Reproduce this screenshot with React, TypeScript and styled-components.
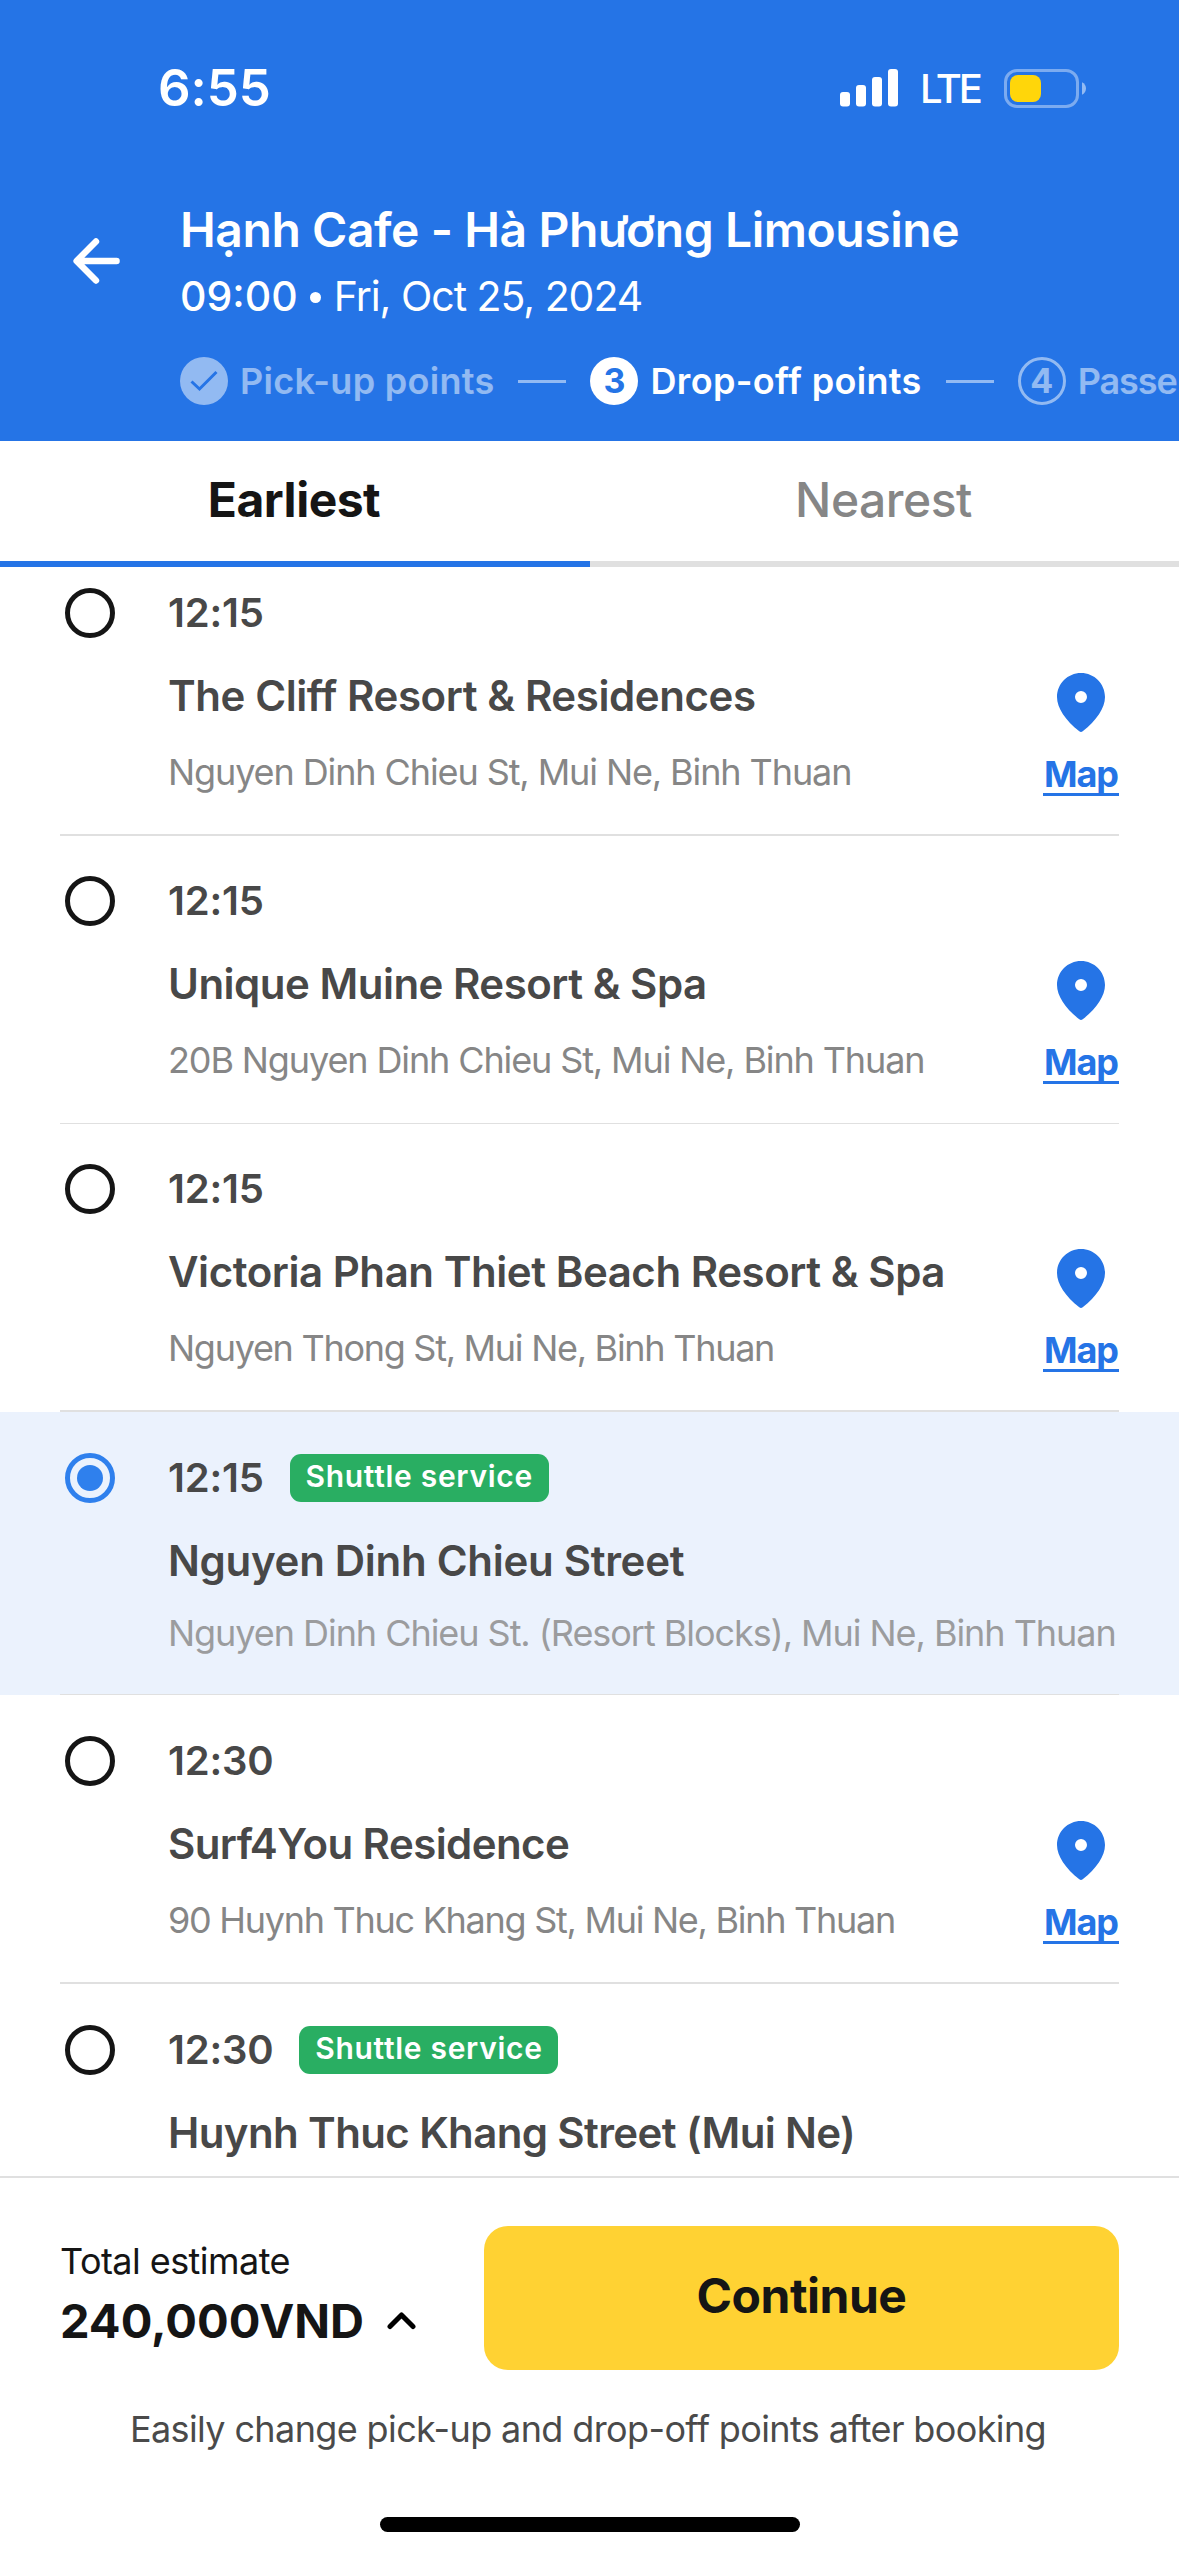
import React from "react";
import styled, { createGlobalStyle, css } from "styled-components";

const BLUE = "#2574e6";
const INK = "#151515";
const LINE = "#e0e0e0";

const GlobalStyle = createGlobalStyle`
  *, *::before, *::after { box-sizing: border-box; }
  html, body { margin: 0; padding: 0; background: #fff; }
  body { font-family: Inter, "Noto Sans", "Liberation Sans", sans-serif; -webkit-font-smoothing: antialiased; }
  button { font: inherit; border: 0; padding: 0; background: none; color: inherit; }
`;

const Screen = styled.div`
  width: 1179px;
  height: 2556px;
  display: flex;
  flex-direction: column;
  overflow: hidden;
  background: #fff;
  white-space: nowrap;
`;

const Header = styled.header`
  flex: none;
  height: 441px;
  overflow: hidden;
  background: ${BLUE};
  color: #fff;
`;

const StatusBar = styled.div`
  height: 176px;
  padding: 0 93px 0 158px;
  display: flex;
  align-items: center;
`;

const Clock = styled.span`
  font-size: 51px;
  font-weight: 600;
  letter-spacing: -0.1px;
  line-height: 60px;
`;

const Indicators = styled.div`
  margin-left: auto;
  display: flex;
  align-items: center;
`;

const Network = styled.span`
  margin: 2px 24px 0 22px;
  font-size: 40px;
  font-weight: 500;
  letter-spacing: -3px;
  line-height: 48px;
`;

const HeaderMain = styled.div`
  display: grid;
  grid-template-columns: 180px 1fr;
  padding-top: 24px;
`;

const BackButton = styled.button`
  height: 122px;
  padding-left: 73px;
  display: flex;
  align-items: center;
`;

const Title = styled.h1`
  margin: 0;
  font-size: 48px;
  font-weight: 600;
  line-height: 60px;
  letter-spacing: -0.44px;
`;

const Subtitle = styled.div`
  margin-top: 6px;
  display: flex;
  align-items: center;
  font-size: 41px;
  line-height: 60px;
`;

const Departure = styled.span`
  font-weight: 500;
`;

const TravelDate = styled.span`
  letter-spacing: -1.02px;
`;

const Dot = styled.span`
  width: 11px;
  height: 11px;
  margin: 2px 13px 0 12px;
  border-radius: 50%;
  background: #fff;
`;

const Steps = styled.div`
  grid-column: 2;
  margin-top: 31px;
  display: flex;
  align-items: center;
  gap: 24px;
`;

const Step = styled.div<{ $active?: boolean }>`
  flex: none;
  display: flex;
  align-items: center;
  gap: 12px;
  height: 48px;
  opacity: ${(p) => (p.$active ? 1 : 0.5)};
`;

const StepMark = styled.span<{ $filled?: boolean }>`
  width: 48px;
  height: 48px;
  border-radius: 50%;
  display: flex;
  align-items: center;
  justify-content: center;
  font-size: 34px;
  font-weight: 700;
  line-height: 1;
  color: ${(p) => (p.$filled ? BLUE : "#fff")};
  ${(p) =>
    p.$filled
      ? css`
          background: #fff;
        `
      : css`
          border: 3px solid #fff;
        `}
`;

const StepLabel = styled.span<{ $spacing: number }>`
  font-size: 36px;
  font-weight: 600;
  line-height: 48px;
  letter-spacing: ${(p) => p.$spacing}px;
`;

const StepLine = styled.span`
  flex: none;
  width: 48px;
  height: 3px;
  background: rgba(255, 255, 255, 0.5);
`;

const Tabs = styled.nav`
  flex: none;
  height: 126px;
  display: grid;
  grid-template-columns: 590px 1fr;
`;

const Tab = styled.button<{ $active?: boolean }>`
  padding: 0 2px 2px 0;
  border-bottom: 6px solid ${(p) => (p.$active ? BLUE : LINE)};
  color: ${(p) => (p.$active ? INK : "#868686")};
  font-size: 48px;
  font-weight: ${(p) => (p.$active ? 700 : 500)};
  letter-spacing: -0.5px;
  line-height: 60px;
`;

const List = styled.main`
  flex: 1;
  min-height: 0;
  overflow: hidden;
`;

const ScrolledRows = styled.div`
  margin-top: -19px;
`;

const Row = styled.section<{ $selected?: boolean; $height?: number }>`
  height: ${(p) => p.$height ?? 288}px;
  padding: 0 60px;
  background: ${(p) => (p.$selected ? "#ebf2fd" : "#fff")};
`;

const RowInner = styled.div<{ $thin?: boolean; $top?: number }>`
  height: 100%;
  padding: ${(p) => p.$top ?? 35}px 0 0 5px;
  border-bottom: ${(p) => (p.$thin ? 1 : 2)}px solid ${LINE};
  display: grid;
  grid-template-columns: 103px 1fr 76px;
`;

const Radio = styled.span<{ $selected?: boolean }>`
  width: 50px;
  height: 50px;
  margin-top: 5px;
  border: 5px solid ${(p) => (p.$selected ? "#2f80ed" : INK)};
  border-radius: 50%;
  display: flex;
  align-items: center;
  justify-content: center;
  &::after {
    content: "";
    width: 26px;
    height: 26px;
    border-radius: 50%;
    background: ${(p) => (p.$selected ? "#2f80ed" : "transparent")};
  }
`;

const TimeLine = styled.div`
  height: 60px;
  display: flex;
  align-items: center;
  gap: 26px;
`;

const Time = styled.span`
  font-size: 40px;
  font-weight: 600;
  line-height: 60px;
  letter-spacing: -0.2px;
  color: #484848;
`;

const Badge = styled.span`
  height: 48px;
  width: 259px;
  margin-top: -1px;
  border-radius: 11px;
  background: #29ae62;
  color: #fff;
  font-size: 30px;
  font-weight: 600;
  letter-spacing: 0.7px;
  line-height: 45px;
  text-align: center;
`;

const Place = styled.h2<{ $spacing?: number }>`
  margin: 23px 0 0;
  color: #484848;
  font-size: 42px;
  font-weight: 600;
  line-height: 60px;
  letter-spacing: ${(p) => p.$spacing ?? -0.42}px;
`;

const Address = styled.p<{ $selected?: boolean; $spacing?: number }>`
  margin: ${(p) => (p.$selected ? 15 : 19)}px 0 0;
  width: 0;
  color: ${(p) => (p.$selected ? "#9b9c9e" : "#868686")};
  font-size: 36px;
  line-height: 54px;
  letter-spacing: ${(p) => p.$spacing ?? -1.1}px;
`;

const MapLink = styled.a`
  padding-top: 90px;
  display: flex;
  flex-direction: column;
  align-items: center;
  color: ${BLUE};
`;

const MapLabel = styled.span`
  width: 76px;
  height: 46px;
  margin-top: 18px;
  border-bottom: 3px solid ${BLUE};
  font-size: 36px;
  font-weight: 700;
  line-height: 48px;
  letter-spacing: -1px;
  text-align: center;
`;

const Footer = styled.footer`
  flex: none;
  height: 380px;
  border-top: 2px solid ${LINE};
  display: flex;
  flex-direction: column;
  align-items: center;
`;

const Checkout = styled.div`
  align-self: stretch;
  margin-top: 48px;
  padding: 0 60px;
  display: grid;
  grid-template-columns: 424px 1fr;
`;

const TotalLabel = styled.div`
  margin-top: 11px;
  color: ${INK};
  font-size: 36px;
  line-height: 48px;
  letter-spacing: -0.55px;
`;

const Total = styled.div`
  margin-top: 6px;
  display: flex;
  align-items: center;
  gap: 23px;
  color: ${INK};
  font-size: 47px;
  font-weight: 700;
  line-height: 60px;
`;

const Continue = styled.button`
  height: 144px;
  border-radius: 24px;
  background: #ffd233;
  color: ${INK};
  font-size: 48px;
  font-weight: 700;
  letter-spacing: -0.5px;
  line-height: 60px;
  padding-bottom: 4px;
`;

const Note = styled.p`
  margin: 35px 3px 0 0;
  color: #4a4a4a;
  font-size: 36px;
  line-height: 48px;
  letter-spacing: -0.62px;
`;

const HomeIndicator = styled.div`
  width: 420px;
  height: 15px;
  margin: auto 0 24px;
  border-radius: 8px;
  background: #000;
`;

const SignalIcon = () => (
  <svg width="58" height="38" viewBox="0 0 58 38" fill="#fff">
    <rect x="0" y="23" width="10" height="14.5" rx="3" />
    <rect x="16" y="16" width="10" height="21.5" rx="3" />
    <rect x="32" y="8" width="10" height="29.5" rx="3" />
    <rect x="48" y="0" width="10" height="37.5" rx="3" />
  </svg>
);

const BatteryIcon = () => (
  <svg width="82" height="39" viewBox="0 0 82 39" fill="none">
    <rect x="1.5" y="1.5" width="72" height="36" rx="11.5" stroke="#fff" strokeOpacity="0.4" strokeWidth="3" />
    <path d="M78 13.2c2.4 1 4 3.4 4 6.3s-1.6 5.3-4 6.3z" fill="#fff" fillOpacity="0.5" />
    <rect x="6" y="6" width="31" height="27" rx="8" fill="#ffd60a" />
  </svg>
);

const ArrowIcon = () => (
  <svg width="47" height="46" viewBox="0 0 47 46" fill="none" stroke="#fff" strokeWidth="6.4" strokeLinecap="round" strokeLinejoin="round">
    <path d="M43.6 23H4M23 3.4L3.6 23 23 42.6" />
  </svg>
);

const CheckIcon = () => (
  <svg width="28" height="22" viewBox="0 0 28 22" fill="none" stroke={BLUE} strokeWidth="3">
    <path d="M1.5 11.5l8 7.5L26.5 2" />
  </svg>
);

const PinIcon = () => (
  <svg width="48" height="59" viewBox="0 0 48 59" fill={BLUE}>
    <path
      fillRule="evenodd"
      d="M24 0C10.700 0 0 10.700 0 24c0 11 8.500 23.500 22.300 34.300a2.800 2.800 0 0 0 3.400 0C39.500 47.500 48 35 48 24 48 10.700 37.300 0 24 0zm0 18.100a6 6 0 1 1 0 12 6 6 0 0 1 0-12z"
    />
  </svg>
);

const ChevronUpIcon = () => (
  <svg width="29" height="18" viewBox="0 0 29 18" fill="none" stroke="#000" strokeWidth="5" strokeLinecap="round" strokeLinejoin="round">
    <path d="M3 14.500L14.500 3 26 14.500" />
  </svg>
);

type Stop = {
  time: string;
  place: string;
  address?: string;
  shuttle?: boolean;
  selected?: boolean;
  thin?: boolean;
  height?: number;
  top?: number;
  placeSpacing?: number;
  addressSpacing?: number;
};

const stops: Stop[] = [
  {
    time: "12:15",
    place: "The Cliff Resort & Residences",
    address: "Nguyen Dinh Chieu St, Mui Ne, Binh Thuan",
  },
  {
    time: "12:15",
    place: "Unique Muine Resort & Spa",
    address: "20B Nguyen Dinh Chieu St, Mui Ne, Binh Thuan",
    thin: true,
    placeSpacing: -0.5,
    addressSpacing: -1.12,
  },
  {
    time: "12:15",
    place: "Victoria Phan Thiet Beach Resort & Spa",
    address: "Nguyen Thong St, Mui Ne, Binh Thuan",
    placeSpacing: -0.45,
    addressSpacing: -1.28,
  },
  {
    time: "12:15",
    place: "Nguyen Dinh Chieu Street",
    address: "Nguyen Dinh Chieu St. (Resort Blocks), Mui Ne, Binh Thuan",
    shuttle: true,
    selected: true,
    thin: true,
    height: 283,
    top: 36,
    placeSpacing: -0.3,
    addressSpacing: -1.05,
  },
  {
    time: "12:30",
    place: "Surf4You Residence",
    address: "90 Huynh Thuc Khang St, Mui Ne, Binh Thuan",
    height: 289,
    top: 36,
    placeSpacing: -0.58,
    addressSpacing: -1.28,
  },
  {
    time: "12:30",
    place: "Huynh Thuc Khang Street (Mui Ne)",
    shuttle: true,
    top: 36,
    placeSpacing: -0.62,
  },
];

const StopRow = ({ stop }: { stop: Stop }) => (
  <Row $selected={stop.selected} $height={stop.height}>
    <RowInner $thin={stop.thin} $top={stop.top}>
      <Radio $selected={stop.selected} />
      <div>
        <TimeLine>
          <Time>{stop.time}</Time>
          {stop.shuttle && <Badge>Shuttle service</Badge>}
        </TimeLine>
        <Place $spacing={stop.placeSpacing}>{stop.place}</Place>
        {stop.address && (
          <Address $selected={stop.selected} $spacing={stop.addressSpacing}>
            {stop.address}
          </Address>
        )}
      </div>
      {!stop.shuttle && (
        <MapLink>
          <PinIcon />
          <MapLabel>Map</MapLabel>
        </MapLink>
      )}
    </RowInner>
  </Row>
);

export default function App() {
  return (
    <Screen>
      <GlobalStyle />
      <Header>
        <StatusBar>
          <Clock>6:55</Clock>
          <Indicators>
            <SignalIcon />
            <Network>LTE</Network>
            <BatteryIcon />
          </Indicators>
        </StatusBar>
        <HeaderMain>
          <BackButton aria-label="Back">
            <ArrowIcon />
          </BackButton>
          <div>
            <Title>Hạnh Cafe - Hà Phương Limousine</Title>
            <Subtitle>
              <Departure>09:00</Departure>
              <Dot />
              <TravelDate>Fri, Oct 25, 2024</TravelDate>
            </Subtitle>
          </div>
          <Steps>
            <Step>
              <StepMark $filled>
                <CheckIcon />
              </StepMark>
              <StepLabel $spacing={0.28}>Pick-up points</StepLabel>
            </Step>
            <StepLine />
            <Step $active>
              <StepMark $filled>3</StepMark>
              <StepLabel $spacing={0.34}>Drop-off points</StepLabel>
            </Step>
            <StepLine />
            <Step>
              <StepMark>4</StepMark>
              <StepLabel $spacing={-1.1}>Passe</StepLabel>
            </Step>
          </Steps>
        </HeaderMain>
      </Header>
      <Tabs>
        <Tab $active>Earliest</Tab>
        <Tab>Nearest</Tab>
      </Tabs>
      <List>
        <ScrolledRows>
          {stops.map((stop) => (
            <StopRow key={stop.place} stop={stop} />
          ))}
        </ScrolledRows>
      </List>
      <Footer>
        <Checkout>
          <div>
            <TotalLabel>Total estimate</TotalLabel>
            <Total>
              240,000VND
              <ChevronUpIcon />
            </Total>
          </div>
          <Continue>Continue</Continue>
        </Checkout>
        <Note>Easily change pick-up and drop-off points after booking</Note>
        <HomeIndicator />
      </Footer>
    </Screen>
  );
}
